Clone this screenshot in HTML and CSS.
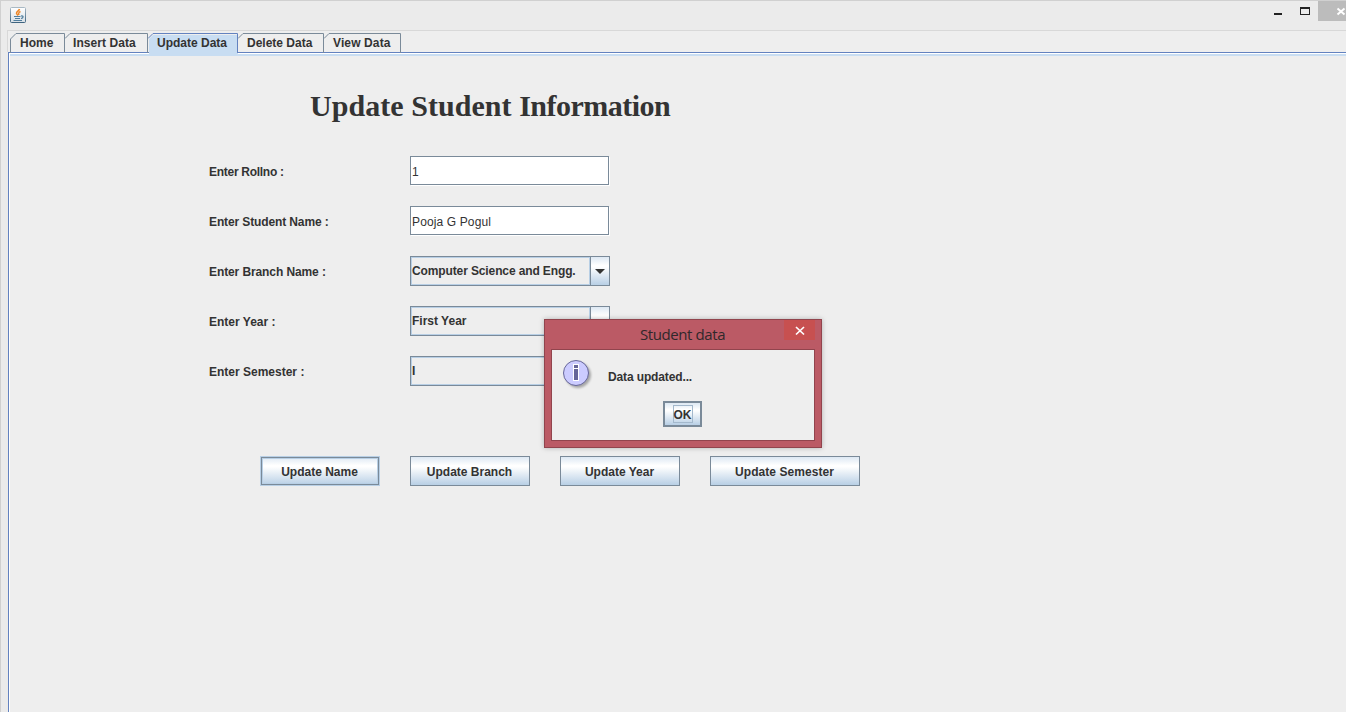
FILE: index.html
```html
<!DOCTYPE html>
<html lang="en">
<head>
<meta charset="utf-8">
<title>Student data</title>
<link rel="stylesheet" href="styles.css">
</head>
<body>
<div class="window">
  <header class="titlebar">
    <svg class="java-icon" width="16" height="16" viewBox="0 0 16 16">
      <defs><linearGradient id="jb" x1="0" y1="0" x2="0" y2="1"><stop offset="0" stop-color="#a9b9c4"/><stop offset="1" stop-color="#3f6480"/></linearGradient>
      <linearGradient id="jf" x1="0" y1="0" x2="0" y2="1"><stop offset="0" stop-color="#fff"/><stop offset="1" stop-color="#d7dfe5"/></linearGradient></defs>
      <rect x=".5" y=".5" width="15" height="15" rx="1" fill="url(#jf)" stroke="url(#jb)"/>
      <path d="M9.500 2C9 4 6 4.500 6.500 6.500L8 8.500M10.500 4.500C8 5.500 8.500 6.500 9 8" fill="none" stroke="#ee8728" stroke-width="1.500"/>
      <path d="M4 9.500H10.500M5 11.500H10M3.500 13.500H12M11 9C14 8.500 13.500 11 11 11.500" fill="none" stroke="#527f9e" stroke-width="1.200"/>
    </svg>
    <div class="controls">
      <svg width="50" height="20" shape-rendering="crispEdges"><path d="M6 12h8v2H6z" fill="#222"/><path d="M32 6h10v8H32zM33 8v5h8V8z" fill="#222" fill-rule="evenodd"/></svg>
      <svg class="win-close" width="28" height="20"><path d="M19.500 7.500L26.500 13.500M26.500 7.500L19.500 13.500" stroke="#fff" stroke-width="1.900"/></svg>
    </div>
  </header>
  <nav class="tabs">
    <div class="tab home"><svg width="55" height="20"><path d="M.5 20V6L6 .5H54.500V20"/></svg><span>Home</span></div>
    <div class="tab insert"><svg width="83" height="20"><path d="M0 5.500L5 .5H82.500V20"/></svg><span>Insert Data</span></div>
    <div class="tab update"><svg width="90" height="23"><path class="fill" d="M1 23V6L5 2H89V20H90V23Z"/><path d="M0 5.500L5 .5H89.500V20"/></svg><span>Update Data</span></div>
    <div class="tab delete"><svg width="86" height="20"><path d="M0 5.500L5 .5H85.500V20"/></svg><span>Delete Data</span></div>
    <div class="tab view"><svg width="77" height="20"><path d="M0 5.500L5 .5H76.500V20"/></svg><span>View Data</span></div>
  </nav>
  <main class="panel">
    <h1>Update Student <span>Information</span></h1>
    <div class="form">
      <label class="roll">Enter Rollno :</label><div class="field">1</div>
      <label class="student">Enter Student Name :</label><div class="field name">Pooja G Pogul</div>
      <label class="branch-label">Enter Branch Name :</label><div class="combo"><div class="value branch">Computer Science and Engg.</div><div class="arrow"><svg width="10" height="5"><path d="M0 0H10L5 5Z"/></svg></div></div>
      <label>Enter Year :</label><div class="combo"><div class="value">First Year</div><div class="arrow"><svg width="10" height="5"><path d="M0 0H10L5 5Z"/></svg></div></div>
      <label>Enter Semester :</label><div class="combo"><div class="value">I</div><div class="arrow"><svg width="10" height="5"><path d="M0 0H10L5 5Z"/></svg></div></div>
    </div>
    <div class="actions">
      <button class="btn focus">Update Name</button>
      <button class="btn">Update Branch</button>
      <button class="btn">Update Year</button>
      <button class="btn wide">Update Semester</button>
    </div>
  </main>
</div>
<div class="dialog">
  <div class="dialog-title">Student data</div>
  <svg class="dialog-close" width="31" height="20"><path d="M12 7L20 14.500M20 7L12 14.500" stroke="#fff" stroke-width="1.700"/></svg>
  <div class="dialog-body">
    <div class="message">
      <svg class="info" width="34" height="34" viewBox="0 0 34 34">
        <circle cx="13" cy="13" r="12.500" fill="#ccccff" stroke="#666699"/>
        <path d="M10 4h6v17h-6z" fill="#fff"/>
        <path d="M11 5h4v3h-4zM11 9h4v11h-4z" fill="#666699"/>
      </svg>
      <span>Data updated...</span>
    </div>
    <button class="ok"><span>OK</span></button>
  </div>
</div>
</body>
</html>
```

FILE: styles.css
```css
* { box-sizing: border-box; }
body {
  margin: 0;
  width: 1346px;
  height: 712px;
  overflow: hidden;
  position: relative;
  background: #eee;
  color: #333;
  font: bold 12px/15px "Liberation Sans", Arial, sans-serif;
  white-space: nowrap;
}
.window {
  height: 712px;
  border-top: 1px solid #d0d0d0;
  border-left: 1px solid #d0d0d0;
  background: #ebebeb;
}
.titlebar {
  height: 29px;
  display: flex;
  justify-content: space-between;
}
.java-icon { margin: 6px 0 0 9px; }
.controls { display: flex; width: 78px; }
.win-close { background: #bcbcbc; }

.tabs {
  height: 22px;
  margin-left: 6px;
  padding: 2px 0 0 2px;
  border-top: 1px solid #d8d8d8;
  border-left: 1px solid #d8d8d8;
  background: #eee;
  display: flex;
}
.tab { position: relative; height: 20px; line-height: 20px; padding-left: 8px; }
.tab svg { position: absolute; left: 0; top: 0; fill: none; stroke: #7a8a99; }
.tab span { position: relative; }
.home { width: 55px; padding-left: 10px; }
.insert { width: 83px; letter-spacing: .06px; }
.update { width: 90px; padding-left: 9px; z-index: 2; }
.update svg { stroke: #6382bf; }
.update .fill { fill: #c8ddf2; stroke: none; }
.delete { width: 86px; padding-left: 9px; }
.view { width: 77px; padding-left: 9px; letter-spacing: .12px; }

.panel {
  height: 660px;
  margin-left: 7px;
  border-top: 1px solid #6382bf;
  border-left: 1px solid #6382bf;
  background: #eee;
  box-shadow: inset 1px 1px #fff, inset 1px 3px #c8ddf2;
}
h1 {
  margin: 0;
  padding: 35px 0 0 301px;
  height: 103px;
  font: bold 30px/36px "Liberation Serif", "Times New Roman", serif;
  letter-spacing: .05px;
}
h1 span { letter-spacing: -.5px; }
.form {
  margin-left: 200px;
  display: grid;
  grid-template-columns: 201px 200px;
  grid-auto-rows: 30px;
  row-gap: 20px;
  align-items: center;
}
label { padding-top: 2px; }
.roll { letter-spacing: -.28px; }
.student { letter-spacing: -.12px; }
.branch-label { letter-spacing: -.1px; }
.field {
  width: 199px;
  height: 29px;
  margin-bottom: 1px;
  padding: 2px 0 0 1px;
  border: 1px solid #7a8a99;
  background: #fff;
  box-shadow: 1px 1px #fff;
  font-weight: normal;
  line-height: 26px;
}
.name { letter-spacing: .13px; }
.combo {
  height: 30px;
  border: 1px solid #7a8a99;
  display: grid;
  grid-template-columns: 179px 19px;
}
.value {
  border: 1px solid #b8cfe5;
  line-height: 26px;
}
.branch { letter-spacing: -.12px; }
.arrow {
  border-left: 1px solid #7a8a99;
  display: grid;
  place-items: center;
  background: linear-gradient(#dde8f3 0, #fff 30%, #fff 35%, #b8cfe5 100%);
}
.arrow svg { fill: #333; }

.actions { margin: 70px 0 0 251px; display: flex; gap: 30px; }
.btn, .ok {
  border: 1px solid #7a8a99;
  border-radius: 0;
  background: linear-gradient(#dde8f3 0, #fff 30%, #fff 35%, #b8cfe5 100%);
  color: #333;
  font: inherit;
  padding: 0;
}
.btn { width: 120px; height: 30px; padding: 2px 1px 0 0; }
.focus { border-color: #b8cfe5; box-shadow: inset 0 0 0 1px #7a8a99, inset 0 0 0 2px #b8cfe5; }
.wide { width: 150px; letter-spacing: .05px; }

.dialog {
  position: absolute;
  left: 544px;
  top: 319px;
  width: 278px;
  height: 129px;
  padding: 0 6px 6px;
  border: 1px solid #91444d;
  background: #bb5a65;
  box-shadow: 0 0 5px rgba(0, 0, 0, .25);
}
.dialog-title {
  height: 29px;
  text-align: center;
  font: 15px/29px "Open Sans", "Noto Sans", sans-serif;
  letter-spacing: -.4px;
  padding-right: 1px;
  color: #30282b;
}
.dialog-close { position: absolute; right: 6px; top: 0; background: #c75050; }
.dialog-body {
  height: 92px;
  border: 1px solid #91444d;
  background: #eee;
}
.message { height: 51px; padding: 10px 0 0 11px; display: flex; gap: 11px; line-height: 35px; letter-spacing: -.13px; }
.info { filter: drop-shadow(2px 2px 1px rgba(0, 0, 0, .3)); flex: none; }
.ok {
  display: grid;
  place-items: center;
  width: 39px;
  height: 26px;
  margin-left: 111px;
  border-width: 2px;
}
.ok span { border: 1px solid #a3b8cc; height: 18px; line-height: 18px; }
```
